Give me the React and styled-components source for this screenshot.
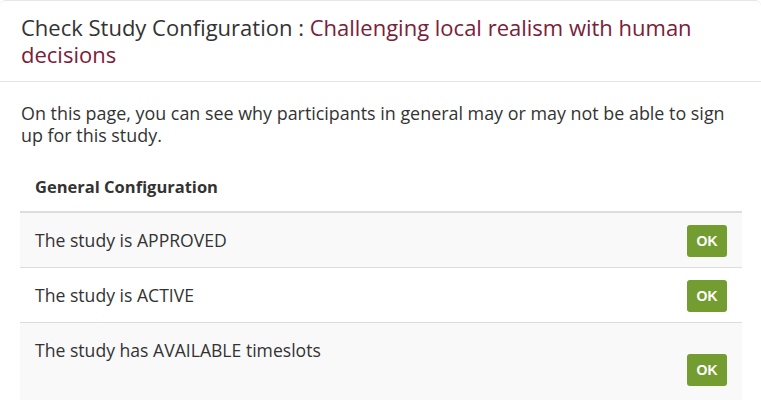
import React from "react";
import styled, { createGlobalStyle } from "styled-components";

const Global = createGlobalStyle`
  html, body { margin: 0; padding: 0; background: #fff; }
  body { font-family: "Open Sans", "Liberation Sans", sans-serif; color: #333; }
  * { box-sizing: border-box; }
`;

const Modal = styled.div`
  width: 761px;
  background: #fff;
  border-top: 1px solid #e6e6e6;
  border-radius: 6px 6px 0 0;
`;

const Header = styled.div`
  padding: 13px 20px 13px 21px;
  border-bottom: 1px solid #e5e5e5;
`;

const Title = styled.h4`
  margin: 0;
  font-size: 22px;
  line-height: 27px;
  font-weight: 400;
  color: #333;
`;

const StudyName = styled.span`
  color: #7b2039;
`;

const Body = styled.div`
  padding: 20px 20px 0 20px;
`;

const Intro = styled.p`
  margin: 0 0 0 1px;
  font-size: 17.9px;
  line-height: 22px;
  color: #333;
`;

const Table = styled.div`
  margin-top: 17px;
  width: 722px;
`;

const HeadRow = styled.div`
  padding: 13px 15px 13px 15px;
  font-weight: 700;
  font-size: 16.5px;
  line-height: 22px;
  border-bottom: 2px solid #ddd;
`;

const Row = styled.div`
  display: flex;
  align-items: center;
  justify-content: space-between;
  background: ${(p) => (p.$striped ? "#f9f9f9" : "#fff")};
  border-top: ${(p) => (p.$first ? "none" : "1px solid #ddd")};
`;

const Label = styled.div`
  padding: 16px 15px;
  font-size: 17.6px;
  line-height: 22px;
  min-height: ${(p) => p.$minHeight || 54}px;
`;

const Status = styled.div`
  padding: 2px 15px 0 0;
`;

const Badge = styled.span`
  display: inline-flex;
  align-items: center;
  justify-content: center;
  width: 40px;
  height: 32px;
  border-radius: 3px;
  background: #739d31;
  color: #fff;
  font-family: "Liberation Sans", Arial, sans-serif;
  font-weight: 700;
  font-size: 14px;
`;

const checks = [
  { label: "The study is APPROVED" },
  { label: "The study is ACTIVE" },
  { label: "The study has AVAILABLE timeslots", minHeight: 92 },
];

export default function App() {
  return (
    <>
      <Global />
      <Modal>
        <Header>
          <Title>
            Check Study Configuration :{" "}
            <StudyName>Challenging local realism with human decisions</StudyName>
          </Title>
        </Header>
        <Body>
          <Intro>
            On this page, you can see why participants in general may or may not be able to sign
            up for this study.
          </Intro>
          <Table>
            <HeadRow>General Configuration</HeadRow>
            {checks.map((c, i) => (
              <Row key={c.label} $striped={i % 2 === 0} $first={i === 0}>
                <Label $minHeight={c.minHeight}>{c.label}</Label>
                <Status>
                  <Badge>OK</Badge>
                </Status>
              </Row>
            ))}
          </Table>
        </Body>
      </Modal>
    </>
  );
}
